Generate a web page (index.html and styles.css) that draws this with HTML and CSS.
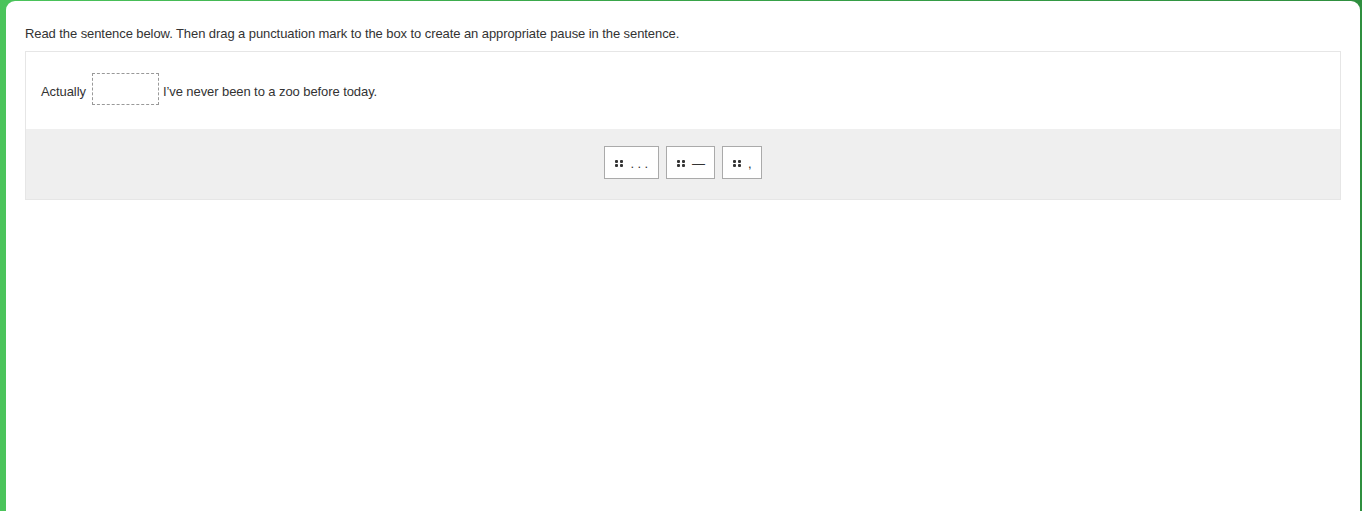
FILE: index.html
```html
<!DOCTYPE html>
<html>
<head>
<meta charset="utf-8">
<link rel="stylesheet" href="styles.css">
</head>
<body>
<div class="card">
  <p class="prompt">Read the sentence below. Then drag a punctuation mark to the box to create an appropriate pause in the sentence.</p>
  <div class="question">
    <div class="sentence">
      <span class="words">Actually</span>
      <span class="drop"></span>
      <span class="words">I’ve never been to a zoo before today.</span>
    </div>
    <div class="bank">
      <div class="tile t1"><span class="handle"><i></i><i></i><i></i><i></i></span><span class="mark">. . .</span></div>
      <div class="tile"><span class="handle"><i></i><i></i><i></i><i></i></span><span class="mark">—</span></div>
      <div class="tile"><span class="handle"><i></i><i></i><i></i><i></i></span><span class="mark">,</span></div>
    </div>
  </div>
</div>
</body>
</html>
```

FILE: styles.css
```css
html, body {
  margin: 0;
  height: 100%;
}
body {
  background: linear-gradient(to right, #4bc45b 0%, #3aa84b 40%, #2f8f3f 100%);
  font-family: "Liberation Sans", Arial, sans-serif;
  font-size: 13px;
  letter-spacing: -0.08px;
  color: #333;
  overflow: hidden;
}
.card {
  margin: 1px 2px 0 6px;
  height: 510px;
  box-sizing: border-box;
  background: #fff;
  border-radius: 9px 9px 0 0;
  padding: 24px 19px 0 19px;
}
.prompt {
  margin: 0 0 8px 0;
  line-height: 18px;
}
.question {
  border: 1px solid #e6e6e6;
}
.sentence {
  display: flex;
  align-items: center;
  padding: 21px 15px 24px 15px;
  line-height: 18px;
}
.words {
  padding-top: 5px;
}
.drop {
  width: 65px;
  height: 30px;
  border: 1px dashed #999;
  margin: 0 4px 0 6px;
}
.bank {
  background: #efefef;
  display: flex;
  justify-content: center;
  gap: 7px;
  padding: 17px 0 20px 0;
}
.tile {
  display: flex;
  align-items: center;
  gap: 7px;
  height: 31px;
  padding: 0 9px 0 10px;
  background: #fff;
  border: 1px solid #aaa;
}
.tile.t1 {
  padding-right: 10px;
}
.handle {
  display: grid;
  grid-template-columns: 3px 3px;
  grid-template-rows: 3px 3px;
  column-gap: 2px;
  row-gap: 1px;
  margin-top: 2px;
}
.handle i {
  display: block;
  background: #333;
  border-radius: 1px;
}
.mark {
  line-height: 18px;
  margin-top: 2px;
}
```
